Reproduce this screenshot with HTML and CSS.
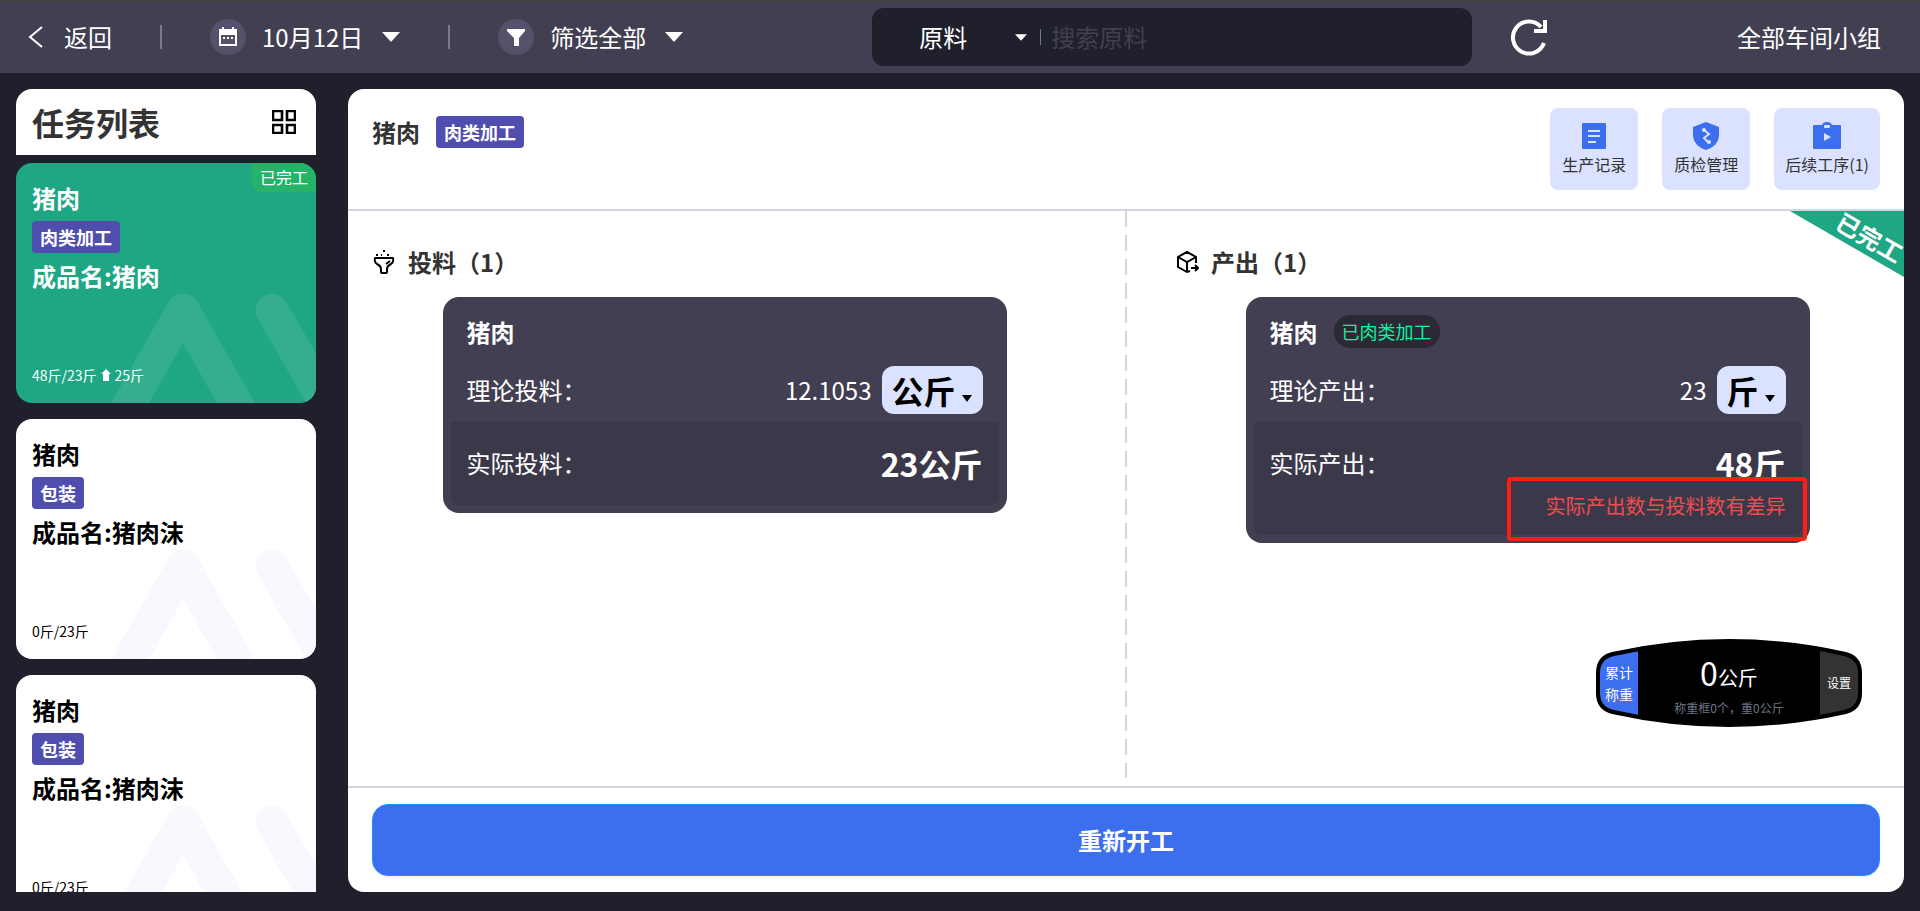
FILE: index.html
```html
<!DOCTYPE html>
<html lang="zh-CN">
<head>
    <meta charset="UTF-8">
    <meta name="viewport" content="width=device-width, initial-scale=1.0">
    <title>任务列表</title>
    <link rel="stylesheet" href="styles.css">
</head>
<body>

<!-- shared shapes -->
<svg class="sprite" aria-hidden="true">
    <symbol id="watermark" viewBox="0 0 300 240">
        <path d="M98 268 L167 147 L236 268 M256 147 L325 268" fill="none" stroke="currentColor" stroke-width="33" stroke-linecap="round" stroke-linejoin="round"/>
    </symbol>
    <symbol id="caret" viewBox="0 0 18 10">
        <path d="M0 0 H18 L9 10 Z" fill="currentColor"/>
    </symbol>
</svg>

<header class="topbar">
    <a class="back" href="#">
        <svg width="16" height="22" viewBox="0 0 16 22"><path d="M14 1 L2 11 L14 21" fill="none" stroke="#fff" stroke-width="2"/></svg>
        <span>返回</span>
    </a>
    <span class="separator"></span>
    <button class="date-button" type="button">
        <span class="round-icon">
            <svg width="20" height="20" viewBox="0 0 20 20">
                <path d="M1 2 H4 V0 H6 V2 H14 V0 H16 V2 H19 V19 H1 Z" fill="#fff"/>
                <path d="M3 8 H17 V17 H3 Z" fill="#53526a"/>
                <path d="M5 10 H7 V12 H5 Z M9 10 H11 V12 H9 Z M13 10 H15 V12 H13 Z" fill="#fff"/>
            </svg>
        </span>
        <span>10月12日</span>
        <svg class="caret" width="18" height="10"><use href="#caret"/></svg>
    </button>
    <span class="separator"></span>
    <label class="filter">
        <span class="round-icon">
            <svg width="20" height="20" viewBox="0 0 20 20"><path d="M1 2 H19 V4 L13 11 V19 H8 V11 L1 4 Z" fill="#fff"/></svg>
        </span>
        <select aria-label="筛选"><option>筛选全部</option></select>
        <svg class="caret" width="18" height="10"><use href="#caret"/></svg>
    </label>

    <div class="search">
        <label class="search-type">
            <select aria-label="搜索类型"><option>原料</option></select>
            <svg width="12" height="7"><use href="#caret"/></svg>
        </label>
        <input type="text" placeholder="搜索原料" aria-label="搜索原料">
    </div>
    <button class="refresh" type="button" aria-label="刷新">
        <svg width="38" height="38" viewBox="0 0 38 38">
            <path d="M34 25 A16 16 0 1 1 31 9" fill="none" stroke="#fff" stroke-width="4"/>
            <path d="M33 2 H37 V15 H24 V11 H33 Z" fill="#fff"/>
        </svg>
    </button>
    <a class="team" href="#">全部车间小组</a>
</header>

<div class="page">
    <aside class="sidebar">
        <div class="sidebar-title">
            <h1>任务列表</h1>
            <button type="button" aria-label="切换视图">
                <svg width="24" height="24" viewBox="0 0 24 24"><path d="M1 1 H10 V10 H1 Z M15 1 H23 V10 H15 Z M1 15 H10 V23 H1 Z M15 15 H23 V23 H15 Z" fill="none" stroke="#000" stroke-width="2.6"/></svg>
            </button>
        </div>
        <div class="task-list">
            <article class="task active">
                <svg class="watermark"><use href="#watermark"/></svg>
                <span class="status">已完工</span>
                <h2>猪肉</h2>
                <span class="badge">肉类加工</span>
                <h2>成品名:猪肉</h2>
                <p class="amount">48斤/23斤
                    <svg width="10" height="12" viewBox="0 0 10 12"><path d="M5 0 L10 5 H8 V12 H2 V5 H0 Z" fill="#fff"/></svg>
                    25斤</p>
            </article>
            <article class="task">
                <svg class="watermark"><use href="#watermark"/></svg>
                <h2>猪肉</h2>
                <span class="badge">包装</span>
                <h2>成品名:猪肉沫</h2>
                <p class="amount">0斤/23斤</p>
            </article>
            <article class="task">
                <svg class="watermark"><use href="#watermark"/></svg>
                <h2>猪肉</h2>
                <span class="badge">包装</span>
                <h2>成品名:猪肉沫</h2>
                <p class="amount">0斤/23斤</p>
            </article>
        </div>
    </aside>

    <main class="detail">
        <div class="detail-header">
            <div class="detail-name">
                <h2>猪肉</h2>
                <span class="badge">肉类加工</span>
            </div>
            <div class="actions">
                <button type="button">
                    <svg width="28" height="28" viewBox="0 0 28 28">
                        <path d="M3 1 Q2 1 2 2 V26 Q2 27 3 27 H25 Q26 27 26 26 V2 Q26 1 25 1 Z" fill="#3d6eee"/>
                        <path d="M8 9 H20 M8 14 H20 M8 20 H16" stroke="#dae2ff" stroke-width="2"/>
                    </svg>
                    生产记录
                </button>
                <button type="button">
                    <svg width="28" height="28" viewBox="0 0 28 28">
                        <path d="M14 0 L27 5 V14 Q26 24 14 28 Q2 24 1 14 V5 Z" fill="#3d6eee"/>
                        <path d="M12 8 L17 12 L12 16 L17 21" fill="none" stroke="#dae2ff" stroke-width="2"/>
                        <circle cx="12" cy="8" r="2" fill="#dae2ff"/>
                        <circle cx="17" cy="20" r="2" fill="#dae2ff"/>
                    </svg>
                    质检管理
                </button>
                <button type="button">
                    <svg width="28" height="28" viewBox="0 0 28 28">
                        <path d="M1 3 H9 Q10 0 14 0 Q18 0 19 3 H27 Q28 3 28 4 V26 Q28 27 27 27 H1 Q0 27 0 26 V4 Q0 3 1 3 Z" fill="#3d6eee"/>
                        <rect x="11" y="3" width="6" height="3" rx="1" fill="#dae2ff"/>
                        <path d="M11 11 L18 15 L11 19 Z" fill="#dae2ff"/>
                    </svg>
                    后续工序(1)
                </button>
            </div>
        </div>

        <div class="columns">
            <section class="column">
                <h3>
                    <svg width="24" height="24" viewBox="0 0 24 24" fill="none" stroke="#000" stroke-width="2" stroke-linejoin="round">
                        <path d="M3 8 H21 Q22 12 19 14 Q15 16 15 19 V22 Q15 23 14 23 H10 Q9 23 9 22 V19 Q9 16 5 14 Q2 12 3 8 Z M18 11 L14 14"/>
                        <path d="M11 1 H13 M4 5 H6 M9 5 H10 M15 5 H17"/>
                    </svg>
                    投料（1）
                </h3>
                <div class="material">
                    <div class="material-name"><h4>猪肉</h4></div>
                    <div class="line">
                        <span>理论投料：</span>
                        <span class="value">12.1053
                            <label class="unit">
                                <select aria-label="单位"><option>公斤</option></select>
                                <svg width="10" height="7" viewBox="0 0 10 7"><path d="M0 0 H10 L5 7 Z"/></svg>
                            </label>
                        </span>
                    </div>
                    <div class="actual">
                        <div class="line">
                            <span>实际投料：</span>
                            <strong>23公斤</strong>
                        </div>
                    </div>
                </div>
            </section>

            <section class="column">
                <h3>
                    <svg width="24" height="24" viewBox="0 0 24 24" fill="none" stroke="#000" stroke-width="2">
                        <path d="M21 13 V7 L12 2 L3 7 V17 L12 22 L15 21 M3 7 L12 12 L21 7 M12 12 V22"/>
                        <path d="M16 18 H23 M20 15 L23 18 L20 21"/>
                    </svg>
                    产出（1）
                </h3>
                <div class="material">
                    <div class="material-name">
                        <h4>猪肉</h4>
                        <span class="process">已肉类加工</span>
                    </div>
                    <div class="line">
                        <span>理论产出：</span>
                        <span class="value">23
                            <label class="unit">
                                <select aria-label="单位"><option>斤</option></select>
                                <svg width="10" height="7" viewBox="0 0 10 7"><path d="M0 0 H10 L5 7 Z"/></svg>
                            </label>
                        </span>
                    </div>
                    <div class="actual">
                        <div class="line">
                            <span>实际产出：</span>
                            <strong>48斤</strong>
                        </div>
                        <p class="warning">实际产出数与投料数有差异</p>
                    </div>
                    <div class="highlight"></div>
                </div>
            </section>

            <div class="ribbon"><span>已完工</span></div>

            <div class="scale">
                <svg class="scale-shape" width="266" height="88" viewBox="0 0 266 88">
                    <clipPath id="scale-inner">
                        <path d="M4 34 Q4 20 18 17 Q133 -9 248 17 Q262 20 262 34 V54 Q262 68 248 71 Q133 97 18 71 Q4 68 4 54 Z"/>
                    </clipPath>
                    <path d="M0 34 Q0 17 16 13 Q133 -13 250 13 Q266 17 266 34 V54 Q266 71 250 75 Q133 101 16 75 Q0 71 0 54 Z"/>
                    <g clip-path="url(#scale-inner)">
                        <path d="M0 12 H42 V77 H0 Z" fill="#3d6eee"/>
                        <path d="M224 12 H266 V77 H224 Z" fill="#333"/>
                    </g>
                </svg>
                <button class="scale-sum" type="button">累计<br>称重</button>
                <div class="scale-reading">
                    <p><b>0</b>公斤</p>
                    <small>称重框0个，重0公斤</small>
                </div>
                <button class="scale-settings" type="button">设置</button>
            </div>
        </div>

        <div class="detail-footer">
            <button type="button">重新开工</button>
        </div>
    </main>
</div>

</body>
</html>
```
FILE: styles.css
```css
* {
    box-sizing: border-box;
}
body {
    margin: 0;
    height: 100vh;
    display: flex;
    flex-direction: column;
    background-color: #201f2c;
    color: #333;
    font-family: "Noto Sans CJK SC", sans-serif;
    font-size: 24px;
    line-height: 36px;
}
h1, h2, h3, h4, p {
    margin: 0;
}
h2, h3, h4 {
    font-size: 24px;
}
a {
    color: inherit;
    text-decoration: none;
}
button, select, input {
    font: inherit;
    color: inherit;
    border: none;
    background: none;
    padding: 0;
    margin: 0;
    outline: none;
}
button, select {
    cursor: pointer;
}
select {
    appearance: none;
}
svg {
    display: block;
    flex: none;
}
.sprite {
    position: absolute;
    width: 0;
    height: 0;
}

/* Top bar */
.topbar {
    display: flex;
    align-items: center;
    flex: none;
    height: 73px;
    padding: 0 39px 0 28px;
    border-top: 1px solid #444644;
    background-color: #413f51;
    color: #fff;
    white-space: nowrap;
}
.back, .date-button, .filter {
    display: flex;
    align-items: center;
}
.back {
    gap: 20px;
}
.separator {
    width: 2px;
    height: 24px;
    margin: 0 48px;
    background-color: #7a798a;
}
.round-icon {
    display: flex;
    align-items: center;
    justify-content: center;
    width: 36px;
    height: 36px;
    margin-right: 16px;
    border-radius: 50%;
    background-color: #53526a;
}
.caret {
    margin-left: 19px;
}
.search {
    display: flex;
    align-items: center;
    width: 600px;
    height: 58px;
    margin-left: auto;
    padding-left: 47px;
    border-radius: 12px;
    background-color: #201f2c;
}
.search-type {
    position: relative;
    display: flex;
    align-items: center;
    justify-content: space-between;
    width: 108px;
}
.search-type::after {
    content: "";
    position: absolute;
    right: -14px;
    width: 1px;
    height: 16px;
    background-color: #7a798a;
}
.search input {
    flex: 1;
    min-width: 0;
    height: 36px;
    margin-left: 24px;
}
.search input::placeholder {
    color: #413f51;
    opacity: 1;
}
.refresh {
    margin-left: 38px;
}
.team {
    margin-left: auto;
}

/* Page */
.page {
    display: flex;
    gap: 32px;
    flex: 1;
    min-height: 0;
    padding: 16px 16px 19px;
}
.sidebar {
    display: flex;
    flex-direction: column;
    gap: 8px;
    flex: none;
    width: 300px;
}
.sidebar-title {
    display: flex;
    align-items: center;
    justify-content: space-between;
    height: 66px;
    padding: 0 20px 0 16px;
    border-radius: 16px 16px 0 0;
    background-color: #fff;
}
.sidebar-title h1 {
    font-size: 32px;
}
.task-list {
    display: flex;
    flex-direction: column;
    gap: 16px;
    flex: 1;
    min-height: 0;
    overflow: hidden;
}
.task {
    position: relative;
    display: flex;
    flex-direction: column;
    align-items: flex-start;
    gap: 5px;
    flex: none;
    height: 240px;
    padding: 17px 16px 13px;
    border-radius: 16px;
    overflow: hidden;
    background-color: #fff;
    color: #000;
}
.task.active {
    background-color: #1fa683;
    color: #fff;
}
.task h2, .badge, .amount {
    position: relative;
}
.watermark {
    position: absolute;
    top: 0;
    left: 0;
    width: 300px;
    height: 240px;
    color: #f8f9fe;
}
.active .watermark {
    color: #35ae90;
}
.status {
    position: absolute;
    top: 0;
    right: 0;
    padding: 0 8px;
    border-bottom-left-radius: 8px;
    background-color: #25b36a;
    font-size: 16px;
    line-height: 29px;
}
.badge {
    padding: 0 8px;
    border-radius: 4px;
    background-color: #4f4dae;
    color: #fff;
    font-size: 18px;
    font-weight: bold;
    line-height: 32px;
}
.amount {
    display: flex;
    align-items: center;
    gap: 4px;
    margin-top: auto;
    font-size: 14px;
    line-height: 30px;
}

/* Detail */
.detail {
    display: flex;
    flex-direction: column;
    flex: 1;
    min-width: 0;
    border-radius: 16px;
    background-color: #fff;
}
.detail-header {
    display: flex;
    justify-content: space-between;
    padding: 19px 24px;
    border-bottom: 2px solid #d5d2e3;
}
.detail-name {
    display: flex;
    align-items: center;
    gap: 16px;
    height: 48px;
}
.actions {
    display: flex;
    gap: 24px;
}
.actions button {
    display: flex;
    flex-direction: column;
    align-items: center;
    gap: 2px;
    height: 82px;
    padding: 14px 12px 0;
    border-radius: 8px;
    background-color: #dae2ff;
    font-size: 16px;
    line-height: 24px;
}
.actions button:last-child {
    padding: 14px 11px 0;
}
.columns {
    position: relative;
    display: flex;
    flex: 1;
}
.column {
    flex: 1;
    padding: 33px 49px 0 24px;
}
.column + .column {
    padding: 33px 24px 0 49px;
}
/* dashed divider between the two columns */
.columns::before {
    content: "";
    position: absolute;
    top: 0;
    bottom: 8px;
    left: calc(50% - 1px);
    width: 2px;
    background: repeating-linear-gradient(#d5d2e3 0 16px, transparent 16px 24px);
}
.column h3 {
    display: flex;
    align-items: center;
    gap: 12px;
}
.material {
    position: relative;
    width: 80%;
    margin: 17px auto 0;
    padding: 16px 8px 8px;
    border-radius: 16px;
    background-color: #413f51;
    color: #fff;
}
.material-name {
    display: flex;
    align-items: center;
    gap: 16px;
    height: 37px;
    margin-bottom: 16px;
    padding: 0 16px;
}
.process {
    padding: 0 8px;
    border-radius: 16px;
    background-color: #2a2935;
    color: #10f3a0;
    font-size: 18px;
    line-height: 33px;
}
.line {
    display: flex;
    align-items: center;
    justify-content: space-between;
    height: 48px;
    padding: 0 16px;
}
.value {
    display: flex;
    align-items: center;
    gap: 10px;
}
.unit {
    position: relative;
}
.unit select {
    display: block;
    height: 48px;
    padding: 0 26px 0 10px;
    border-radius: 12px;
    background-color: #dae2ff;
    color: #000;
    font-size: 32px;
    font-weight: bold;
}
.unit svg {
    position: absolute;
    right: 11px;
    bottom: 12px;
}
.actual {
    margin-top: 8px;
    padding: 13px 0 14px;
    border-radius: 0 0 8px 8px;
    background-color: #3b3949;
}
.actual .line {
    height: 56px;
}
.actual strong {
    font-size: 32px;
}
.warning {
    padding: 0 16px;
    color: #f04c50;
    font-size: 20px;
    line-height: 30px;
    text-align: right;
}
.highlight {
    position: absolute;
    right: 3px;
    bottom: 2px;
    width: 300px;
    height: 64px;
    border: 4px solid #ff1e12;
    border-radius: 4px;
}
.ribbon {
    position: absolute;
    top: 0;
    right: 0;
    width: 114px;
    height: 66px;
    background-color: #1fa683;
    clip-path: polygon(0 0, 100% 0, 100% 100%);
    color: #fff;
    font-weight: bold;
}
.ribbon span {
    position: absolute;
    top: 8px;
    right: -2px;
    transform: rotate(30deg);
}

/* Floating scale */
.scale {
    position: absolute;
    right: 42px;
    bottom: 59px;
    display: flex;
    align-items: center;
    width: 266px;
    height: 88px;
    padding: 0 4px;
    color: #fff;
}
.scale-shape {
    position: absolute;
    top: 0;
    left: 0;
}
.scale button, .scale-reading {
    position: relative;
}
.scale button {
    width: 38px;
    height: 64px;
    font-size: 12px;
    line-height: 22px;
}
.scale .scale-sum {
    font-size: 14px;
}
.scale-reading {
    flex: 1;
    padding-top: 4px;
    text-align: center;
}
.scale-reading p {
    font-size: 20px;
    line-height: 40px;
}
.scale-reading b {
    font-size: 32px;
    font-weight: normal;
}
.scale-reading small {
    display: block;
    color: #6f7588;
    font-size: 12px;
    line-height: 20px;
}

.detail-footer {
    padding: 16px 24px;
    border-top: 2px solid #d5d2e3;
}
.detail-footer button {
    display: block;
    width: 100%;
    height: 72px;
    border: 1px solid #1890ff;
    border-radius: 16px;
    background-color: #3d6eee;
    box-shadow: 0 2px 0 rgba(0, 0, 0, 0.04);
    color: #fff;
    font-weight: bold;
}
```
